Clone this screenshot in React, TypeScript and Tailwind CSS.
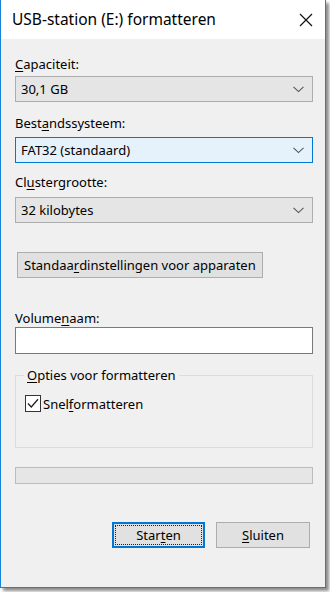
import React from "react";

const font = { fontFamily: '"Noto Sans", "Open Sans", Arial, sans-serif' };

function U({ children }: { children: React.ReactNode }) {
  return <span className="underline underline-offset-2 decoration-1">{children}</span>;
}

function Chevron() {
  return (
    <svg width="11" height="7" viewBox="0 0 11 7" className="shrink-0">
      <path d="M0.5 0.8 L5.5 5.6 L10.5 0.8" fill="none" stroke="#555" strokeWidth="1.1" />
    </svg>
  );
}

function Combo({ text, focused }: { text: string; focused?: boolean }) {
  return (
    <div
      className={
        "h-[26px] flex items-center justify-between pl-[5px] pr-[8px] border " +
        (focused ? "bg-[#e5f1fb] border-[#0078d7]" : "bg-[#e5e5e5] border-[#adadad]")
      }
    >
      <span className="text-[13px] text-black leading-none">{text}</span>
      <Chevron />
    </div>
  );
}

export default function App() {
  return (
    <div className="w-[330px] h-[592px] bg-white relative" style={font}>
      <div className="w-[326px] h-[588px] flex flex-col bg-[#f0f0f0] border-l border-r border-b border-[#1883d7] shadow-[3px_3px_3px_rgba(0,0,0,0.45)]">
        {/* title bar */}
        <div className="h-[39px] bg-white flex items-center justify-between pl-[11px] pr-[12px] shrink-0">
          <span className="text-[15.5px] text-black leading-none">USB-station (E:) formatteren</span>
          <svg width="14" height="14" viewBox="0 0 14 14">
            <path d="M1 1 L13 13 M13 1 L1 13" stroke="#111" strokeWidth="1.2" fill="none" />
          </svg>
        </div>
        {/* body */}
        <div className="flex flex-col pl-[14px] pr-[12px] text-[13px] text-black">
          <div className="mt-[17px] h-[16px] leading-[16px]"><U>C</U>apaciteit:</div>
          <div className="mt-[4px]"><Combo text="30,1 GB" /></div>

          <div className="mt-[13px] h-[16px] leading-[16px]">Best<U>a</U>ndssysteem:</div>
          <div className="mt-[6px]"><Combo text="FAT32 (standaard)" focused /></div>

          <div className="mt-[11px] h-[16px] leading-[16px]">Cl<U>u</U>stergrootte:</div>
          <div className="mt-[7px]"><Combo text="32 kilobytes" /></div>

          <div className="mt-[29px] flex">
            <div className="h-[26px] ml-[2px] px-[6px] flex items-center bg-[#e1e1e1] border border-[#adadad] leading-none">
              Standaa<U>r</U>dinstellingen voor apparaten
            </div>
          </div>

          <div className="mt-[32px] h-[16px] leading-[16px]">Volume<U>n</U>aam:</div>
          <div className="mt-[1px] h-[27px] bg-white border border-[#7a7a7a]" />

          <div className="mt-[21px] h-[73px] border border-[#dcdcdc] relative">
            <div className="absolute left-[8px] top-[-9px] px-[3px] bg-[#f0f0f0] leading-[16px]">
              <U>O</U>pties voor formatteren
            </div>
            <div className="mt-[19px] ml-[9px] flex items-center gap-[2px]">
              <div className="w-[16px] h-[17px] bg-white border border-[#333] flex items-center justify-center">
                <svg width="12" height="11" viewBox="0 0 12 11">
                  <path d="M1 5.5 L4.3 9 L11 1.3" fill="none" stroke="#222" strokeWidth="1.3" />
                </svg>
              </div>
              <span className="leading-[16px]">Snel<U>f</U>ormatteren</span>
            </div>
          </div>

          <div className="mt-[19px] h-[17px] bg-[#e6e6e6] border border-[#bcbcbc]" />

          <div className="mt-[38px] flex justify-end gap-[11px] pr-[3px]">
            <div className="w-[93px] h-[26px] border-2 border-[#0078d7] bg-[#e1e1e1] p-[1px]">
              <div className="w-full h-full border border-dotted border-[#222] flex items-center justify-center leading-none">
                Star<U>t</U>en
              </div>
            </div>
            <div className="w-[94px] h-[26px] border border-[#adadad] bg-[#e1e1e1] flex items-center justify-center leading-none">
              <U>S</U>luiten
            </div>
          </div>
        </div>
      </div>
    </div>
  );
}
